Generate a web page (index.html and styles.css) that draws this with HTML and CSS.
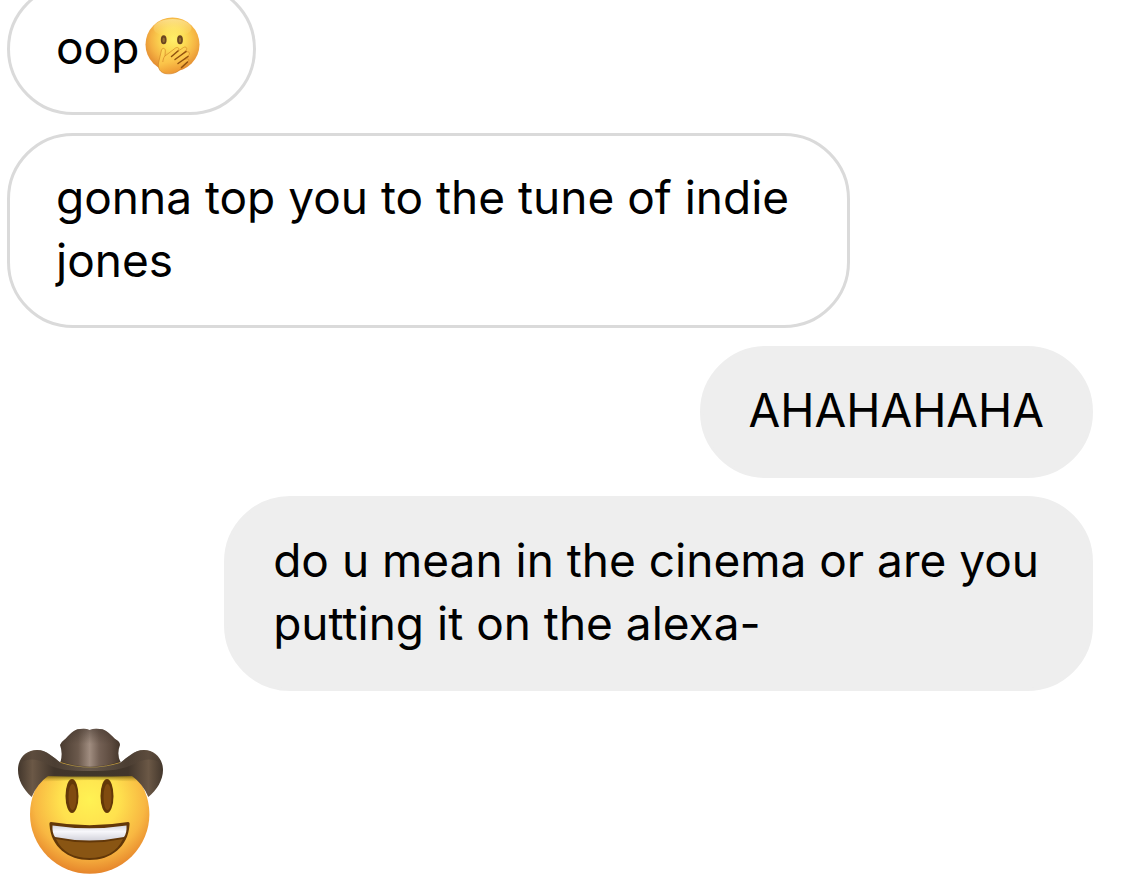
FILE: index.html
```html
<!DOCTYPE html>
<html lang="en">
<head>
    <meta charset="UTF-8">
    <meta name="viewport" content="width=device-width, initial-scale=1.0">
    <title>Chat</title>
    <link rel="stylesheet" href="styles.css">
</head>
<body>
    <main class="thread">
        <p class="bubble received">oop<svg class="emoji" viewBox="0 0 56 58" role="img" aria-label="Face with hand over mouth">
            <defs>
                <radialGradient id="faceSmall" cx="52%" cy="40%" r="60%">
                    <stop offset="0" stop-color="#fff06a"/>
                    <stop offset="0.35" stop-color="#fddc54"/>
                    <stop offset="0.7" stop-color="#f5b343"/>
                    <stop offset="1" stop-color="#e28a30"/>
                </radialGradient>
                <linearGradient id="shineSmall" x1="0" y1="0" x2="0" y2="1">
                    <stop offset="0" stop-color="#fff6b8" stop-opacity="0.6"/>
                    <stop offset="1" stop-color="#fff07a" stop-opacity="0"/>
                </linearGradient>
                <linearGradient id="hand" x1="0" y1="0" x2="0.3" y2="1">
                    <stop offset="0" stop-color="#ffdf5c"/>
                    <stop offset="0.6" stop-color="#fbc44a"/>
                    <stop offset="1" stop-color="#ee9a34"/>
                </linearGradient>
            </defs>
            <circle cx="27.5" cy="27.5" r="27" fill="url(#faceSmall)"/>
            <ellipse cx="27.5" cy="11" rx="19" ry="9" fill="url(#shineSmall)"/>
            <ellipse cx="18.7" cy="22.7" rx="2.9" ry="4.5" fill="#6b4520"/>
            <ellipse cx="35" cy="22.7" rx="2.9" ry="4.5" fill="#6b4520"/>
            <ellipse cx="18.7" cy="23" rx="1.2" ry="2.6" fill="#96702f"/>
            <ellipse cx="35" cy="23" rx="1.2" ry="2.6" fill="#96702f"/>
            <path d="M16.5 33C17.5 30.5 20.5 31 20.3 34L20 39L30.5 31C33 29.5 35 31.5 33 33.5L31 35.5L38.5 30.5C41.5 29 43 32 40.5 34L36 38L41.5 35C44.5 34 45.5 37 43 39L38 43L41.5 42C44 41.5 44.5 43.5 42.5 45L36 51.5C33 55.5 27 57.5 21 56.7C15.5 56 12.5 51.5 13.5 46Z" fill="url(#hand)" stroke="#cf7e20" stroke-width="0.6"/>
            <path d="M33 34L26.5 39.5M41 34.5L30 42.5M43 39.5L33 46.5M42.5 45L36.5 50.5" fill="none" stroke="#91520f" stroke-width="1.5" stroke-linecap="round"/>
            <path d="M19.8 39C18.5 41 18 43 17.8 45" fill="none" stroke="#dc9330" stroke-width="0.9"/>
        </svg></p>
        <p class="bubble received">gonna top you to the tune of indie jones</p>
        <p class="bubble sent">AHAHAHAHA</p>
        <p class="bubble sent">do u mean in the cinema or are you putting it on the alexa-</p>

        <svg class="emoji-large" viewBox="0 0 148 148" role="img" aria-label="Cowboy hat face">
            <defs>
                <radialGradient id="face" cx="50%" cy="38%" r="62%">
                    <stop offset="0" stop-color="#fff253"/>
                    <stop offset="0.4" stop-color="#ffe14e"/>
                    <stop offset="0.75" stop-color="#f8b742"/>
                    <stop offset="1" stop-color="#e6852b"/>
                </radialGradient>
                <linearGradient id="crown" x1="0" y1="0" x2="1" y2="0">
                    <stop offset="0" stop-color="#493b30"/>
                    <stop offset="0.3" stop-color="#6b594c"/>
                    <stop offset="0.49" stop-color="#a08d80"/>
                    <stop offset="0.65" stop-color="#746155"/>
                    <stop offset="0.85" stop-color="#5d4b3f"/>
                    <stop offset="1" stop-color="#43352a"/>
                </linearGradient>
                <linearGradient id="crownShade" x1="0" y1="0" x2="0" y2="1">
                    <stop offset="0" stop-color="#3d3028" stop-opacity="0.5"/>
                    <stop offset="0.4" stop-color="#3d3028" stop-opacity="0"/>
                </linearGradient>
                <linearGradient id="brim" x1="0" y1="0" x2="1" y2="0">
                    <stop offset="0" stop-color="#43372c"/>
                    <stop offset="0.1" stop-color="#6b5846"/>
                    <stop offset="0.25" stop-color="#41352b"/>
                    <stop offset="0.5" stop-color="#40362a"/>
                    <stop offset="0.76" stop-color="#41352b"/>
                    <stop offset="0.9" stop-color="#6b5846"/>
                    <stop offset="1" stop-color="#43372c"/>
                </linearGradient>
                <linearGradient id="brimTop" x1="0" y1="0" x2="1" y2="0">
                    <stop offset="0" stop-color="#4a3c31"/>
                    <stop offset="0.25" stop-color="#57483b"/>
                    <stop offset="0.5" stop-color="#8c796a"/>
                    <stop offset="0.75" stop-color="#57483b"/>
                    <stop offset="1" stop-color="#4a3c31"/>
                </linearGradient>
                <linearGradient id="shadow" x1="0" y1="0" x2="0" y2="1">
                    <stop offset="0" stop-color="#54430d" stop-opacity="0.9"/>
                    <stop offset="1" stop-color="#b39a1c" stop-opacity="0"/>
                </linearGradient>
                <linearGradient id="teeth" x1="0" y1="0" x2="0" y2="1">
                    <stop offset="0" stop-color="#d5d5dc"/>
                    <stop offset="0.4" stop-color="#f7f7fb"/>
                    <stop offset="1" stop-color="#d3d3dc"/>
                </linearGradient>
            </defs>
            <circle cx="72.7" cy="86" r="59.7" fill="url(#face)"/>
            <path d="M27 47H119L122 54Q73 50 24 54Z" fill="url(#shadow)"/>
            <!-- eyes -->
            <ellipse cx="55" cy="68" rx="6.5" ry="17" fill="#633808"/>
            <ellipse cx="90" cy="68" rx="6.5" ry="17" fill="#633808"/>
            <ellipse cx="55.5" cy="69" rx="4" ry="13" fill="#804b10"/>
            <ellipse cx="90.5" cy="69" rx="4" ry="13" fill="#804b10"/>
            <!-- mouth -->
            <path d="M34 94Q72.5 100.5 111 94Q113 94 112.5 97C111 119 94 132 72.5 132S34 119 32.5 97Q32 94 34 94Z" fill="#623708"/>
            <path d="M39 111Q72.5 118 106 111C100 124 88 130 72.5 130S45 124 39 111Z" fill="#895513"/>
            <path d="M35.5 97.5Q72.5 103 109.5 97.5Q110 105 107 109Q72.5 116 38 109Q35 105 35.5 97.5Z" fill="url(#teeth)"/>
            <!-- hat -->
            <path d="M14.7 69C6 61 1 52 1 42C1 30 9 22 20 22C30 22 37 30 44 35Q73 44 103 35C110 30 117 22 127 22C138 22 146 31 146 42C146 52 140 62 131.3 69Q126 56 115 48Q73 49 31 48Q20 56 14.7 69Z" fill="url(#brim)"/>
            <path d="M4 35C8 26 14 22 20 22C30 22 37 30 44 35Q73 43 103 35C110 30 117 22 127 22C133 22 140 26 143 35C136 30 127 31 119 35C106 42 93 43 73 43S40 42 28 35C20 31 11 30 4 35Z" fill="url(#brimTop)" opacity="0.5"/>
            <path d="M43.5 34Q46 25 43 17Q44 14 47 12C52 8 56 1 63 1Q69 0 72.5 2Q77 0 83 1C90 1 94 8 99.7 12Q103 14 103 17Q99.500 26 103.5 34Q73 44 43.5 34Z" fill="url(#crown)"/>
            <path d="M43.5 34Q46 25 43 17Q44 14 47 12C52 8 56 1 63 1Q69 0 72.5 2Q77 0 83 1C90 1 94 8 99.7 12Q103 14 103 17Q99.500 26 103.5 34Q73 44 43.5 34Z" fill="url(#crownShade)"/>
            <path d="M43 34Q73 44 104 34" fill="none" stroke="#342820" stroke-width="1" opacity="0.4"/>
        </svg>
    </main>
</body>
</html>
```
FILE: styles.css
```css
* {
    box-sizing: border-box;
}
body {
    margin: 0;
    background: #fff;
    color: #000;
    font-family: Inter, "Liberation Sans", sans-serif;
    font-size: 46px;
    line-height: 63px;
    overflow: hidden;
}
/* The oldest message is scrolled partly out of view */
.thread {
    display: flex;
    flex-direction: column;
    gap: 18px;
    margin-top: -17px;
    padding: 0 36px 8px 7px;
}
.bubble {
    margin: 0;
    padding: 30px 46px 33px;
    border: 3px solid #dadada;
    border-radius: 66px;
}
.received {
    align-self: flex-start;
    max-width: calc(80% - 26px);
}
.sent {
    align-self: flex-end;
    max-width: 80%;
    background: #eee;
    border-color: #eee;
}
.emoji {
    width: 56px;
    height: 58px;
    margin: 0 6px;
    vertical-align: -11px;
}
.emoji-large {
    width: 148px;
    height: 148px;
    margin: 19px 10px 0;
}
```
